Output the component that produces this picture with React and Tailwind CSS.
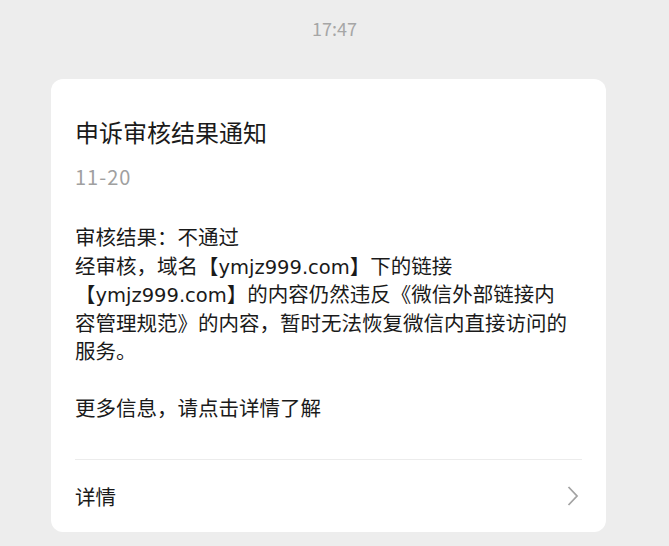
export default function App() {
  const font = { fontFamily: '"Noto Sans CJK SC", "Noto Sans", sans-serif' };
  const latin = "font-['DejaVu_Sans'] text-[19.5px] leading-none";
  return (
    <div className="min-h-[546px] w-full bg-[#ededed] pt-[16px]" style={font}>
      <div className="text-center text-[18px] leading-[24px] text-[#a6a6a6]">17:47</div>
      <div className="ml-[51px] mt-[39px] w-[555px] rounded-[12px] bg-white px-[24px] pt-[37px]">
        <div className="text-[24px] leading-[32px] text-[#1a1a1a]">申诉审核结果通知</div>
        <div className="mt-[15px] text-[20px] leading-[28px] tracking-[1px] text-[#a0a0a0]">11-20</div>
        <div className="mt-[31px] max-w-[500px] text-[20.5px] leading-[28.5px] text-[#1a1a1a]">
          <div>审核结果：不通过</div>
          <div>
            经审核，域名【<span className={latin}>ymjz999.com</span>】下的链接【<span className={latin}>ymjz999.com</span>】的内容仍然违反《微信外部链接内容管理规范》的内容，暂时无法恢复微信内直接访问的服务。
          </div>
          <div className="h-[28.5px]" />
          <div>更多信息，请点击详情了解</div>
        </div>
        <div className="mt-[37px] flex h-[73px] items-center justify-between border-t border-[#ececec]">
          <span className="text-[20.5px] leading-[28px] text-[#1a1a1a]">详情</span>
          <svg width="12" height="20" viewBox="0 0 12 20" className="mr-[3px]">
            <path d="M1.5 1 L10 10 L1.5 19" fill="none" stroke="#a3a3a3" strokeWidth="1.8" />
          </svg>
        </div>
      </div>
    </div>
  );
}
